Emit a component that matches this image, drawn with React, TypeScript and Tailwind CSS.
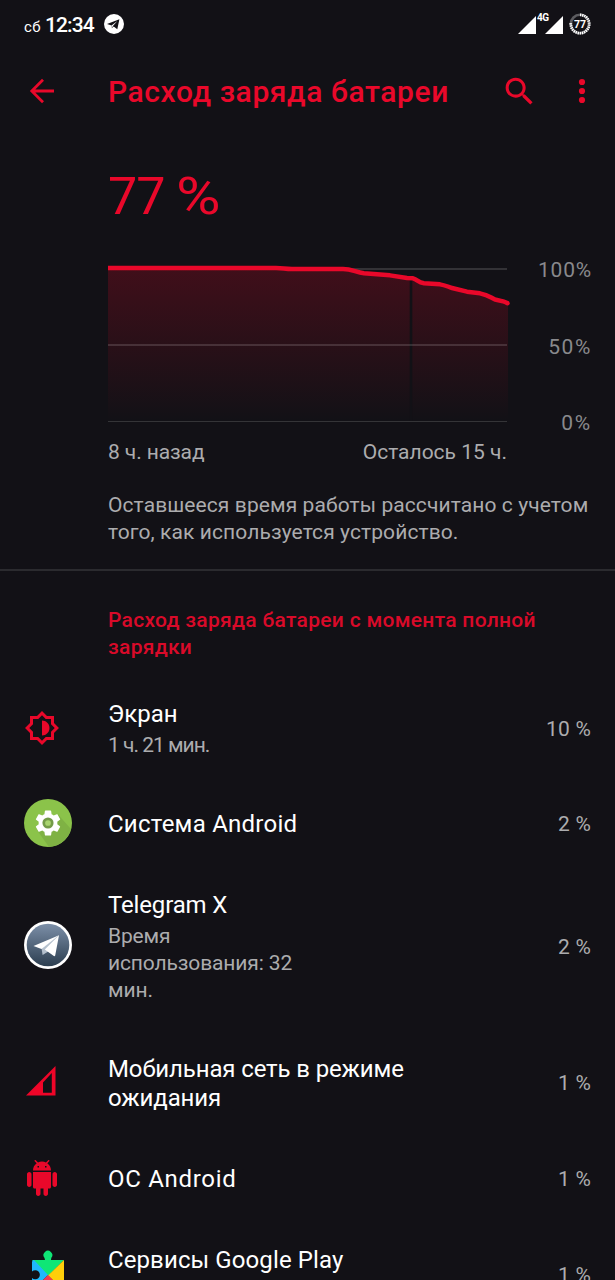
// Battery usage screen
import type { ReactNode } from 'react';

interface UsageItem {
  name: string;
  nameClass: string;
  detail?: string[];
  detailClass?: string;
  percent: string;
  icon: ReactNode;
}

const TelegramStatusIcon = () => (
  <svg className="w-5 h-5" viewBox="0 0 20 20">
    <circle cx="10" cy="10" r="10" fill="#fff" />
    <path d="M3 10.1L15.4 5.2L13.3 15.2L9.7 12.6L7.9 14.3L7.6 11.4Z" fill="#121116" />
    <path d="M7.5 11.5L13.4 7L8.9 12.1L8 14.2Z" fill="#fff" />
  </svg>
);

const SignalIcon = () => (
  <svg className="mt-0.5 w-[18px] h-[18px] shrink-0" viewBox="0 0 18 18">
    <path d="M0 18L18 0V18Z" fill="#fff" />
  </svg>
);

const BatteryRing = () => (
  <svg className="w-[22px] h-[22px]" viewBox="0 0 22 22">
    <circle cx="11" cy="11" r="9.2" fill="none" stroke="#5c5c60" strokeWidth="2.6" />
    <circle
      cx="11"
      cy="11"
      r="9.2"
      fill="none"
      stroke="#fff"
      strokeWidth="2.8"
      pathLength="100"
      strokeDasharray="2.4 1.3 2.4 1.3 2.4 1.3 2.4 1.3 2.4 1.3 2.4 1.3 2.4 1.3 2.4 1.3 2.4 1.3 2.4 1.3 2.4 1.3 2.4 1.3 2.4 1.3 2.4 1.3 2.4 1.3 2.4 1.3 2.4 1.3 2.4 1.3 2.4 1.3 2.4 1.3 2.4 100"
      transform="rotate(-90 11 11)"
    />
    <text x="11" y="15" textAnchor="middle" fontSize="10.5" fontWeight="700" fontFamily="Roboto, sans-serif" fill="#fff">
      77
    </text>
  </svg>
);

const ScreenIcon = () => (
  <svg className="w-9 h-9 -mt-[3px]" viewBox="0 0 24 24" fill="#e9082a">
    <path d="M20 8.69V4h-4.69L12 .69 8.69 4H4v4.69L.69 12 4 15.31V20h4.69L12 23.31 15.31 20H20v-4.69L23.31 12 20 8.69zm-2 5.79V18h-3.52L12 20.48 9.52 18H6v-3.52L3.52 12 6 9.52V6h3.52L12 3.52 14.48 6H18v3.52L20.48 12 18 14.48z" />
    <path d="M12 7v10c2.76 0 5-2.24 5-5s-2.24-5-5-5z" />
  </svg>
);

const AndroidSystemIcon = () => (
  <svg className="w-12 h-12 -mt-[3px]" viewBox="0 0 48 48">
    <circle cx="24" cy="24" r="24" fill="#8bc34a" />
    <path d="M13 31L25 47.9A24 24 0 0 0 47 30L34 15.5Z" fill="#7fb244" />
    <g transform="translate(8.4 8.4) scale(1.3)">
      <path
        fill="#fff"
        d="M19.14 12.94c.04-.3.06-.61.06-.94 0-.32-.02-.64-.07-.94l2.03-1.58c.18-.14.23-.41.12-.61l-1.92-3.32c-.12-.22-.37-.29-.59-.22l-2.39.96c-.5-.38-1.03-.7-1.62-.94l-.36-2.54c-.04-.24-.24-.41-.48-.41h-3.84c-.24 0-.43.17-.47.41l-.36 2.54c-.59.24-1.13.57-1.62.94l-2.39-.96c-.22-.08-.47 0-.59.22L2.74 8.87c-.12.21-.08.47.12.61l2.03 1.58c-.05.3-.09.63-.09.94s.02.64.07.94l-2.03 1.58c-.18.14-.23.41-.12.61l1.92 3.32c.12.22.37.29.59.22l2.39-.96c.5.38 1.03.7 1.62.94l.36 2.54c.05.24.24.41.48.41h3.84c.24 0 .44-.17.47-.41l.36-2.54c.59-.24 1.13-.56 1.62-.94l2.39.96c.22.08.47 0 .59-.22l1.92-3.32c.12-.22.07-.47-.12-.61l-2.01-1.58z"
      />
      <circle cx="12" cy="12" r="4.3" fill="#739b48" />
      <circle cx="12" cy="12" r="2.2" fill="#a9d46f" />
    </g>
  </svg>
);

const TelegramXIcon = () => (
  <svg className="w-12 h-12 -mt-[5px]" viewBox="0 0 48 48">
    <defs>
      <linearGradient id="tgx" x1="0" y1="0" x2="0" y2="1">
        <stop offset="0" stopColor="#7c8fa8" />
        <stop offset="1" stopColor="#2c3e50" />
      </linearGradient>
    </defs>
    <circle cx="24" cy="24" r="24" fill="#fff" />
    <circle cx="24" cy="24" r="21.3" fill="url(#tgx)" />
    <path d="M17.5 27L18.6 34L25 30L35 14Z" fill="#b4c0cd" />
    <path d="M9.5 25L35 14.2L17.5 28Z" fill="#fff" />
    <path d="M20.8 28.6L35 14.2L31.2 34.6Q30.6 35.6 29.5 34.8Z" fill="#fff" />
  </svg>
);

const MobileNetworkIcon = () => (
  <svg className="w-9 h-9 -mt-[7px] -ml-px" viewBox="0 0 36 36">
    <path d="M3 33.5L32.5 4V33.5ZM20 20.5V30.8H28.8V11Z" fill="#ef0528" fillRule="evenodd" />
  </svg>
);

const AndroidOsIcon = () => (
  <svg className="w-9 h-9 -mt-[3px]" viewBox="0 0 24 24">
    <path
      fill="#e9082a"
      d="M6 18c0 .55.45 1 1 1h1v3.5c0 .83.67 1.5 1.5 1.5s1.5-.67 1.5-1.5V19h2v3.5c0 .83.67 1.5 1.5 1.5s1.5-.67 1.5-1.5V19h1c.55 0 1-.45 1-1V8H6v10zM3.5 8C2.67 8 2 8.67 2 9.5v7c0 .83.67 1.5 1.5 1.5S5 17.33 5 16.5v-7C5 8.67 4.33 8 3.5 8zm17 0c-.83 0-1.5.67-1.5 1.5v7c0 .83.67 1.5 1.5 1.5s1.5-.67 1.5-1.5v-7c0-.83-.67-1.5-1.5-1.5zm-4.97-5.84l1.3-1.3c.2-.2.2-.51 0-.71-.2-.2-.51-.2-.71 0l-1.48 1.48C13.85 1.23 12.95 1 12 1c-.96 0-1.86.23-2.66.63L7.85.15c-.2-.2-.51-.2-.71 0-.2.2-.2.51 0 .71l1.31 1.31C6.97 3.26 6 5.01 6 7h12c0-1.99-.97-3.75-2.47-4.84zM10 5H9V4h1v1zm5 0h-1V4h1v1z"
    />
  </svg>
);

const PlayServicesIcon = () => (
  <svg className="w-12 h-12 -mt-[5px]" viewBox="0 0 48 48">
    <path d="M8 11H40L24 27Z" fill="#0fe676" />
    <path d="M20.5 12Q21.5 10.5 20.4 8.8A4.4 4.4 0 1 1 27.4 8.8Q26.5 10.5 27.5 12Z" fill="#0fe676" />
    <path d="M8 13Q8 11 10 11L24 26L8 42V29A4.6 4.6 0 1 0 8 22.5Z" fill="#1fb8fb" />
    <path d="M40 11V42L24 26.5Z" fill="#ffcf0a" />
    <path d="M8 42L24 26L40 42Z" fill="#f43b4e" />
  </svg>
);

const items: UsageItem[] = [
  {
    name: 'Экран',
    nameClass: 'tracking-normal',
    detail: ['1 ч. 21 мин.'],
    detailClass: 'mt-[3px] -mb-px tracking-[-1px]',
    percent: '10 %',
    icon: <ScreenIcon />,
  },
  { name: 'Система Android', nameClass: 'tracking-[0.25px]', percent: '2 %', icon: <AndroidSystemIcon /> },
  {
    name: 'Telegram X',
    nameClass: 'tracking-[-0.15px]',
    detail: ['Время', 'использования: 32', 'мин.'],
    detailClass: 'mt-[3px] tracking-[-0.13px]',
    percent: '2 %',
    icon: <TelegramXIcon />,
  },
  {
    name: 'Мобильная сеть в режиме ожидания',
    nameClass: 'pt-px tracking-[-0.13px]',
    percent: '1 %',
    icon: <MobileNetworkIcon />,
  },
  { name: 'ОС Android', nameClass: 'tracking-[0.7px]', percent: '1 %', icon: <AndroidOsIcon /> },
  {
    name: 'Сервисы Google Play',
    nameClass: 'tracking-[0.1px]',
    detail: [''],
    detailClass: 'mt-[3px]',
    percent: '1 %',
    icon: <PlayServicesIcon />,
  },
];

const LEVEL_LINE =
  'M0 8H168C176 8 176 9 184 9H235C244 9 248 12.5 256 13.3L282 15.3L299 18L305 18.3C310 20 310 22.5 316 23.2L332 24.3C338 25.3 340 27 344 28L359 31.7L372 33.3C380 35 382 37 387 39.5L395 41.3L400 43.3';

const BatteryChart = () => (
  <svg className="w-[404px] h-[164px]" viewBox="0 0 404 164" fill="none">
    <defs>
      <linearGradient id="level" x1="0" y1="8" x2="0" y2="161" gradientUnits="userSpaceOnUse">
        <stop offset="0" stopColor="#ef0528" stopOpacity="0.21" />
        <stop offset="1" stopColor="#ef0528" stopOpacity="0" />
      </linearGradient>
    </defs>
    <path d={`${LEVEL_LINE}V161H0Z`} fill="url(#level)" />
    <path d="M303 19V161" stroke="#121116" strokeWidth="2.6" />
    <path d="M0 9H399M0 85H399" stroke="#fff" strokeOpacity="0.14" strokeWidth="2" />
    <path d="M0 161.5H399" stroke="#343437" />
    <path d={LEVEL_LINE} stroke="#e9082a" strokeWidth="4.4" strokeLinejoin="round" />
    <circle cx="399.5" cy="43.2" r="2.2" fill="#e9082a" />
  </svg>
);

export default function App() {
  return (
    <div className="w-full h-[1280px] overflow-hidden bg-[#121116] font-['Roboto','Noto_Sans',sans-serif] text-white">
      {/* Status bar */}
      <div className="flex h-12 items-center justify-between pl-6 pr-6">
        <div className="flex items-baseline pt-[3px]">
          <span className="text-[15px] leading-6 tracking-[0.4px]">сб</span>
          <span className="ml-1 text-[21px] leading-6 font-medium tracking-[-0.9px]">12:34</span>
          <span className="-mt-[3px] ml-[10px] self-center">
            <TelegramStatusIcon />
          </span>
        </div>
        <div className="flex items-center">
          <SignalIcon />
          <span className="-mt-3 w-[9px] pl-px text-[10px] leading-3 font-bold tracking-[-0.5px]">4G</span>
          <SignalIcon />
          <span className="ml-[6px]">
            <BatteryRing />
          </span>
        </div>
      </div>

      {/* App bar */}
      <div className="flex h-[86px] items-center text-[#e9082a]">
        <svg className="ml-6 w-9 h-9" viewBox="0 0 36 36" fill="none" stroke="currentColor" strokeWidth="2.8">
          <path d="M30 18H8M19 6.8L7.8 18L19 29.2" />
        </svg>
        <h1 className="ml-12 flex-1 pt-px text-[30px] leading-9 font-medium tracking-[0.6px] whitespace-nowrap">
          Расход заряда батареи
        </h1>
        <svg className="w-[37px] h-[37px]" viewBox="0 0 24 24" fill="currentColor">
          <path d="M15.5 14h-.79l-.28-.27C15.41 12.59 16 11.11 16 9.5 16 5.91 13.09 3 9.5 3S3 5.91 3 9.5 5.91 16 9.5 16c1.61 0 3.09-.59 4.23-1.57l.27.28v.79l5 4.99L20.49 19l-4.99-5zm-6 0C7.01 14 5 11.99 5 9.5S7.01 5 9.5 5 14 7.01 14 9.5 11.99 14 9.5 14z" />
        </svg>
        <svg className="ml-[26px] mr-[15px] w-9 h-9" viewBox="0 0 36 36" fill="currentColor">
          <circle cx="18" cy="9" r="3.1" />
          <circle cx="18" cy="18" r="3.1" />
          <circle cx="18" cy="27" r="3.1" />
        </svg>
      </div>

      {/* Battery level */}
      <div className="h-[437px] border-b-2 border-[#2b2b2f] pl-[108px] pt-[32px]">
        <div className="text-[52px] leading-[62px] text-[#e9082a]">
          <span className="tracking-[-1px]">77 </span>
          <span className="inline-block origin-left scale-x-[1.17]">%</span>
        </div>
        <div className="mt-[32px] flex justify-between pr-6">
          <BatteryChart />
          <div className="-mt-[3px] -mr-px flex h-[180px] flex-col justify-between text-right text-[21px] leading-[27px] text-[#89898c]">
            <span className="tracking-[0.8px]">100%</span>
            <span className="tracking-[1.6px]">50%</span>
            <span className="tracking-[1.8px]">0%</span>
          </div>
        </div>
        <div className="mt-0.5 flex w-[399px] justify-between text-[21px] leading-[27px] text-[#acacae]">
          <span className="tracking-[-0.1px]">8 ч. назад</span>
          <span>Осталось 15 ч.</span>
        </div>
        <p className="mt-[26px] text-[21px] leading-[27px] tracking-[0.09px] text-[#acacae] whitespace-nowrap">
          Оставшееся время работы рассчитано с учетом
          <br />
          того, как используется устройство.
        </p>
      </div>

      {/* Usage list */}
      <h2 className="h-[104px] pl-[108px] pt-[36px] text-[21px] leading-[27px] font-medium tracking-[0.3px] text-[#d90a29]">
        Расход заряда батареи с момента полной
        <br />
        зарядки
      </h2>
      {items.map((item) => (
        <div key={item.name} className="flex min-h-[83px] items-center py-[25px] pl-6 pr-6">
          <div className="-my-6 w-[84px] shrink-0">{item.icon}</div>
          <div className="w-[310px]">
            <div className={`text-2xl leading-[29px] ${item.nameClass}`}>{item.name}</div>
            {item.detail && (
              <div className={`text-[21px] leading-[27px] text-[#acacae] ${item.detailClass}`}>
                {item.detail.map((line) => (
                  <div key={line} className="h-[27px]">
                    {line}
                  </div>
                ))}
              </div>
            )}
          </div>
          <div className="ml-auto text-[21px] leading-[27px] tracking-[0.2px] text-[#acacae]">{item.percent}</div>
        </div>
      ))}
    </div>
  );
}
